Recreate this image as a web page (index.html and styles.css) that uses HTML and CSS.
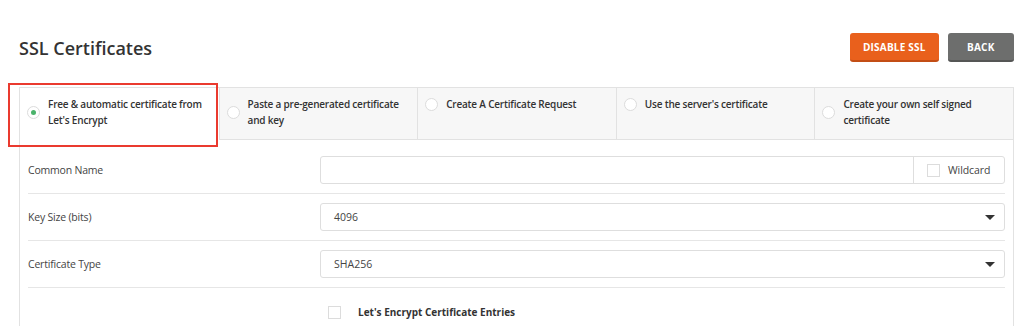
FILE: index.html
```html
<!DOCTYPE html>
<html lang="en">
<head>
  <meta charset="UTF-8" />
  <meta name="viewport" content="width=device-width, initial-scale=1.0" />
  <title>SSL Certificates</title>
  <link rel="stylesheet" href="styles.css">
</head>
<body>
  <div class="page">
    <div class="header">
      <h1 class="title">SSL Certificates</h1>
      <div class="actions">
        <div class="btn btn-orange">Disable SSL</div>
        <div class="btn btn-gray">Back</div>
      </div>
    </div>

    <div class="panel">
      <div class="tabs">
        <div class="tab active">
          <div class="choice">
            <span class="radio checked"></span>
            <span class="tab-text">Free &amp; automatic certificate from Let's Encrypt</span>
          </div>
          <div class="highlight"></div>
        </div>
        <div class="tab">
          <div class="choice">
            <span class="radio"></span>
            <span class="tab-text">Paste a pre-generated certificate and key</span>
          </div>
        </div>
        <div class="tab">
          <div class="choice">
            <span class="radio"></span>
            <span class="tab-text">Create A Certificate Request</span>
          </div>
        </div>
        <div class="tab">
          <div class="choice">
            <span class="radio"></span>
            <span class="tab-text">Use the server's certificate</span>
          </div>
        </div>
        <div class="tab">
          <div class="choice">
            <span class="radio"></span>
            <span class="tab-text">Create your own self signed certificate</span>
          </div>
        </div>
      </div>

      <div class="form">
        <div class="row">
          <div class="label">Common Name</div>
          <div class="field input-group">
            <div class="input"></div>
            <div class="addon">
              <span class="checkbox"></span>
              Wildcard
            </div>
          </div>
        </div>
        <div class="row">
          <div class="label">Key Size (bits)</div>
          <div class="field select">
            4096
            <span class="caret"></span>
          </div>
        </div>
        <div class="row">
          <div class="label">Certificate Type</div>
          <div class="field select">
            SHA256
            <span class="caret"></span>
          </div>
        </div>
        <div class="row last">
          <div class="label"></div>
          <div class="check-line">
            <span class="checkbox"></span>
            <span class="check-text">Let's Encrypt Certificate Entries</span>
          </div>
        </div>
      </div>
    </div>
  </div>
</body>
</html>
```

FILE: styles.css
```css
body {
  margin: 0;
  font-family: "Open Sans", sans-serif;
  background: #ffffff;
  color: #333333;
}
.page {
  padding: 0 10px 0 19px;
}
.header {
  display: flex;
  justify-content: space-between;
  align-items: center;
  height: 87px;
  padding-top: 8px;
  box-sizing: border-box;
}
.title {
  margin: 0;
  font-size: 18px;
  font-weight: 600;
  color: #333333;
}
.actions {
  display: flex;
  gap: 9px;
}
.btn {
  height: 29px;
  line-height: 28px;
  box-sizing: border-box;
  border-radius: 3px;
  color: #ffffff;
  font-size: 10px;
  font-weight: 700;
  text-transform: uppercase;
  letter-spacing: 0.2px;
}
.btn-orange {
  background: #e9601c;
  border-bottom: 2px solid #c34e15;
  padding: 0 13px;
}
.btn-gray {
  background: #6d6e6d;
  border-bottom: 2px solid #555655;
  padding: 0 19.5px;
}
.panel {
  border: 1px solid #e2e2e2;
  border-top: none;
}
.tabs {
  display: grid;
  grid-template-columns: repeat(5, 1fr);
  border-top: 1px solid #e2e2e2;
}
.tab {
  position: relative;
  display: flex;
  align-items: flex-start;
  height: 52px;
  box-sizing: border-box;
  padding: 8px 8px 0 7px;
  background: #f7f7f7;
  border-left: 1px solid #e2e2e2;
  border-bottom: 1px solid #e2e2e2;
}
.tab:first-child {
  border-left: none;
}
.tab.active {
  background: #ffffff;
  border-bottom-color: #ffffff;
}
.choice {
  display: flex;
  align-items: center;
  gap: 8px;
}
.radio {
  flex: none;
  width: 13px;
  height: 13px;
  box-sizing: border-box;
  border: 1px solid #dcdcdc;
  border-radius: 50%;
  background: #ffffff;
  position: relative;
}
.radio.checked::after {
  content: '';
  position: absolute;
  left: 3px;
  top: 3px;
  width: 5px;
  height: 5px;
  border-radius: 50%;
  background: #4bb36b;
}
.tab-text {
  font-size: 10px;
  font-weight: 600;
  line-height: 16px;
  letter-spacing: -0.2px;
  color: #333333;
  padding-right: 4px;
}
.highlight {
  position: absolute;
  left: -12px;
  top: -5px;
  width: 206px;
  height: 60px;
  border: 2px solid #ea3a2f;
}
.form {
  padding: 7px 8px 0 8px;
}
.row {
  display: flex;
  align-items: center;
  padding: 9px 0;
  border-bottom: 1px solid #e6e6e6;
}
.row.last {
  border-bottom: none;
  padding: 17px 0 9px 0;
}
.label {
  width: 292px;
  flex: none;
  font-size: 10.5px;
  font-weight: 500;
  letter-spacing: -0.2px;
  color: #444444;
}
.field {
  flex: 1;
  height: 28px;
  box-sizing: border-box;
  border: 1px solid #dedede;
  border-radius: 3px;
  font-size: 10.5px;
  color: #444444;
}
.input-group {
  display: flex;
}
.input {
  flex: 1;
}
.addon {
  display: flex;
  align-items: center;
  gap: 8px;
  width: 91px;
  box-sizing: border-box;
  padding-left: 13px;
  border-left: 1px solid #dedede;
  font-weight: 500;
  letter-spacing: -0.1px;
  color: #444444;
}
.checkbox {
  flex: none;
  width: 13px;
  height: 13px;
  box-sizing: border-box;
  border: 1px solid #dcdcdc;
  background: #ffffff;
  display: inline-block;
}
.select {
  display: flex;
  align-items: center;
  justify-content: space-between;
  padding: 0 9px 0 13px;
}
.caret {
  width: 0;
  height: 0;
  border-left: 5px solid transparent;
  border-right: 5px solid transparent;
  border-top: 5px solid #333333;
}
.check-line {
  display: flex;
  align-items: center;
  gap: 17px;
  padding-left: 8px;
}
.check-text {
  font-size: 10px;
  font-weight: 700;
  color: #333333;
}
```
